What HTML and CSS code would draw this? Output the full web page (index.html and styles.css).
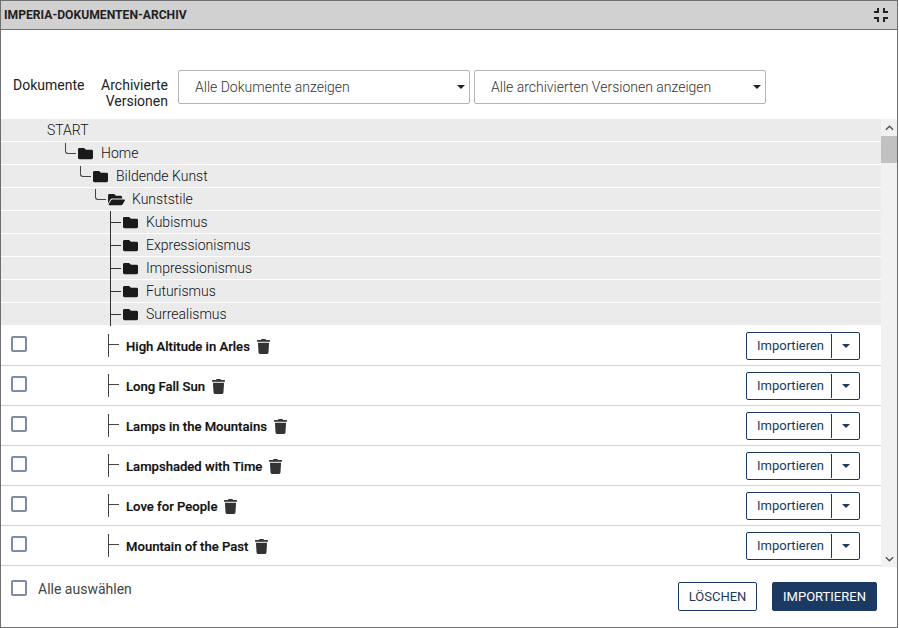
FILE: index.html
```html
<!DOCTYPE html>
<html lang="de">
<head>
<meta charset="utf-8">
<title>Imperia-Dokumenten-Archiv</title>
<link rel="stylesheet" href="styles.css">
</head>
<body>
<svg class="defs" aria-hidden="true">
  <symbol id="i-folder" viewBox="0 0 512 512"><path d="M464 128H272l-64-64H48C21.49 64 0 85.49 0 112v288c0 26.51 21.49 48 48 48h416c26.51 0 48-21.49 48-48V176c0-26.51-21.49-48-48-48z"/></symbol>
  <symbol id="i-open" viewBox="0 0 576 512"><path d="M572.694 292.093L500.27 416.248A63.997 63.997 0 0 1 444.989 448H45.025c-18.523 0-30.064-20.093-20.731-36.093l72.424-124.155A64 64 0 0 1 152 256h399.964c18.523 0 30.064 20.093 20.73 36.093zM152 224h328v-48c0-26.51-21.49-48-48-48H272l-64-64H48C21.49 64 0 85.49 0 112v278.046l69.077-118.418C86.214 242.25 117.989 224 152 224z"/></symbol>
  <symbol id="i-trash" viewBox="0 0 448 512"><path d="M432 32H312l-9.4-18.7A24 24 0 0 0 281.1 0H166.8a23.72 23.72 0 0 0-21.4 13.3L136 32H16A16 16 0 0 0 0 48v32a16 16 0 0 0 16 16h416a16 16 0 0 0 16-16V48a16 16 0 0 0-16-16zM53.2 467a48 48 0 0 0 47.9 45h245.8a48 48 0 0 0 47.9-45L416 128H32z"/></symbol>
</svg>
<div class="dialog">
  <header class="titlebar">
    <h1 class="title">IMPERIA-DOKUMENTEN-ARCHIV</h1>
    <svg class="compress" viewBox="0 0 24 24"><path d="M5 16h3v3h2v-5H5v2zm3-8H5v2h5V5H8v3zm6 11h2v-3h3v-2h-5v5zm2-11V5h-2v5h5V8h-3z"/></svg>
  </header>
  <div class="filters">
    <span class="filter-label first">Dokumente</span>
    <span class="filter-label second">Archivierte<br>Versionen</span>
    <div class="select"><span>Alle Dokumente anzeigen</span><i class="caret"></i></div>
    <div class="select"><span>Alle archivierten Versionen anzeigen</span><i class="caret"></i></div>
  </div>
  <div class="browser">
    <div class="scroll-content">
      <div class="tree">
        <div class="node"><span class="start">START</span></div>
        <div class="node l1"><i class="elbow"></i><svg class="folder"><use href="#i-folder"/></svg><span>Home</span></div>
        <div class="node l2"><i class="elbow"></i><svg class="folder"><use href="#i-folder"/></svg><span>Bildende Kunst</span></div>
        <div class="node l3"><i class="elbow"></i><svg class="folder open"><use href="#i-open"/></svg><span>Kunststile</span></div>
        <div class="node l4"><i class="tee"></i><svg class="folder"><use href="#i-folder"/></svg><span>Kubismus</span></div>
        <div class="node l4"><i class="tee"></i><svg class="folder"><use href="#i-folder"/></svg><span>Expressionismus</span></div>
        <div class="node l4"><i class="tee"></i><svg class="folder"><use href="#i-folder"/></svg><span>Impressionismus</span></div>
        <div class="node l4"><i class="tee"></i><svg class="folder"><use href="#i-folder"/></svg><span>Futurismus</span></div>
        <div class="node l4"><i class="tee"></i><svg class="folder"><use href="#i-folder"/></svg><span>Surrealismus</span></div>
      </div>
      <div class="doc"><i class="check"></i><i class="doc-tee"></i><strong class="doc-name">High Altitude in Arles</strong><svg class="trash"><use href="#i-trash"/></svg><div class="split"><span class="split-main">Importieren</span><span class="split-more"><i class="caret navy"></i></span></div></div>
      <div class="doc"><i class="check"></i><i class="doc-tee"></i><strong class="doc-name">Long Fall Sun</strong><svg class="trash"><use href="#i-trash"/></svg><div class="split"><span class="split-main">Importieren</span><span class="split-more"><i class="caret navy"></i></span></div></div>
      <div class="doc"><i class="check"></i><i class="doc-tee"></i><strong class="doc-name">Lamps in the Mountains</strong><svg class="trash"><use href="#i-trash"/></svg><div class="split"><span class="split-main">Importieren</span><span class="split-more"><i class="caret navy"></i></span></div></div>
      <div class="doc"><i class="check"></i><i class="doc-tee"></i><strong class="doc-name">Lampshaded with Time</strong><svg class="trash"><use href="#i-trash"/></svg><div class="split"><span class="split-main">Importieren</span><span class="split-more"><i class="caret navy"></i></span></div></div>
      <div class="doc"><i class="check"></i><i class="doc-tee"></i><strong class="doc-name">Love for People</strong><svg class="trash"><use href="#i-trash"/></svg><div class="split"><span class="split-main">Importieren</span><span class="split-more"><i class="caret navy"></i></span></div></div>
      <div class="doc"><i class="check"></i><i class="doc-tee"></i><strong class="doc-name">Mountain of the Past</strong><svg class="trash"><use href="#i-trash"/></svg><div class="split"><span class="split-main">Importieren</span><span class="split-more"><i class="caret navy"></i></span></div></div>
    </div>
    <div class="scrollbar">
      <div class="arrow"><svg viewBox="0 0 10 6"><path d="M1 5l4-4 4 4"/></svg></div>
      <div class="thumb"></div>
      <div class="track"></div>
      <div class="arrow"><svg viewBox="0 0 10 6"><path d="M1 1l4 4 4-4"/></svg></div>
    </div>
  </div>
  <footer class="footer">
    <label class="select-all"><i class="check"></i><span>Alle auswählen</span></label>
    <div class="actions">
      <span class="btn outline">LÖSCHEN</span>
      <span class="btn solid">IMPORTIEREN</span>
    </div>
  </footer>
</div>
</body>
</html>
```

FILE: styles.css
```css
* { box-sizing: border-box; }
html, body { margin: 0; height: 100%; background: #fff; }
body { font-family: Roboto, "Liberation Sans", sans-serif; color: #333; font-size: 14px; overflow: hidden; }
.defs { width: 0; height: 0; position: absolute; }
i { display: block; font-style: normal; }

.dialog { width: 898px; height: 628px; border: 1px solid #6f6f6f; display: flex; flex-direction: column; background: #fff; }

.titlebar { height: 29px; flex: none; background: #d1d1d1; border-bottom: 1px solid #6f6f6f; display: flex; align-items: center; justify-content: space-between; padding: 0 6px 1px 3px; }
.title { margin: 0; font-size: 12.15px; font-weight: 700; color: #222; }
.compress { width: 24px; height: 24px; fill: #222; margin-right: -2px; }

.filters { height: 89px; flex: none; display: flex; align-items: flex-start; padding-top: 40px; }
.filter-label { color: #222; line-height: 16px; }
.first { width: 88px; padding: 7px 0 0 12px; }
.second { width: 89px; text-align: right; padding: 7px 10px 0 0; }
.select { width: 292px; height: 34px; margin-right: 4px; border: 1px solid #b5b5b5; border-radius: 2px; display: flex; align-items: center; justify-content: space-between; padding: 0 4px 0 16px; color: #333; font-weight: 300; }
.caret { width: 0; height: 0; border-left: 4px solid transparent; border-right: 4px solid transparent; border-top: 4px solid #222; }
.caret.navy { border-top-color: #1b3a63; }

.browser { height: 448px; flex: none; display: flex; }
.scroll-content { width: 880px; overflow: hidden; }
.node { height: 23px; background: #ebebeb; border-bottom: 1px solid #fff; display: flex; align-items: center; color: #111; font-weight: 300; }
.start { margin: -1px 0 0 46px; }
.l1 { padding-left: 64px; }
.l2 { padding-left: 79px; }
.l3 { padding-left: 94px; }
.l4 { padding-left: 109px; }
.elbow { width: 11px; height: 11px; margin: -9px 2px 0 0; border-left: 1px solid #444; border-bottom: 1px solid #444; border-radius: 0 0 0 3px; }
.tee { width: 11px; height: 23px; margin-right: 2px; background: linear-gradient(#333, #333) left / 1px 100% no-repeat, linear-gradient(#333, #333) left 50% / 100% 1px no-repeat; }
.folder { width: 15px; height: 15px; fill: #1a1a1a; margin-right: 8px; flex: none; }
.l3 .folder { width: 17px; margin-right: 7px; }

.doc { height: 40px; display: flex; align-items: center; border-bottom: 1px solid #d0d0d0; padding-right: 21px; }
.doc .check { margin: -3px 0 0 10px; }
.doc-tee { width: 11px; height: 23px; margin: 0 7px 0 81px; background: linear-gradient(#444, #444) left / 1px 100% no-repeat, linear-gradient(#444, #444) left 45% / 100% 1px no-repeat; }
.doc-name { font-size: 13.1px; font-weight: 500; color: #111; margin-top: 2px; -webkit-text-stroke: 0.2px #111; }
.trash { width: 13px; height: 15px; fill: #333; margin: 2px 0 0 7px; flex: none; }
.check { width: 16px; height: 16px; border: 2px solid #7d8da8; border-radius: 2px; flex: none; background: #fff; }

.split { margin-left: auto; width: 114px; height: 28px; border: 1px solid #1b3a63; border-radius: 2px; display: flex; align-items: center; color: #1b3a63; font-size: 13px; }
.split-main { width: 85px; height: 24px; border-right: 1px solid #1b3a63; padding-left: 10px; line-height: 24px; flex: none; }
.split-more { flex: 1; display: flex; justify-content: center; }

.scrollbar { width: 16px; flex: none; background: #f1f1f1; display: flex; flex-direction: column; }
.arrow { height: 17px; flex: none; display: flex; align-items: center; justify-content: center; }
.arrow svg { width: 9px; height: 6px; fill: none; stroke: #505050; stroke-width: 1.5; }
.thumb { height: 27px; flex: none; background: #c1c1c1; }
.track { flex: 1; }

.footer { flex: 1; display: flex; justify-content: space-between; padding: 13px 20px 0 10px; }
.select-all { display: flex; align-items: flex-start; gap: 11px; color: #444; }
.select-all span { line-height: 16px; margin-top: 1px; }
.actions { display: flex; gap: 15px; padding-top: 2px; }
.btn { height: 29px; border-radius: 2px; display: flex; align-items: center; justify-content: center; font-size: 13px; font-weight: 400; border: 1px solid #1b3a63; }
.outline { width: 79px; color: #1b3a63; background: #fff; }
.solid { width: 105px; color: #fff; background: #1b3a63; }
```
